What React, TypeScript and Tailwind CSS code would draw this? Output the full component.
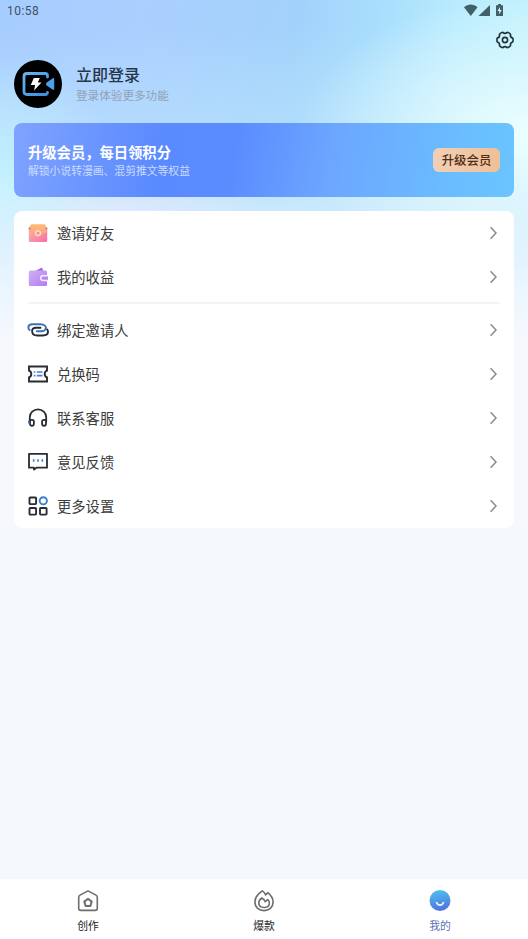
import type { ReactNode } from "react";

type RowProps = { icon: ReactNode; label: string };

// Menu icons
const InviteIcon = () => (
  <svg width="20" height="20" viewBox="0 0 20 20" fill="none">
    <defs>
      <linearGradient id="inviteBack" x1="0" y1="0" x2="0" y2="1">
        <stop stopColor="#fdbb74" />
        <stop offset="1" stopColor="#fba08f" />
      </linearGradient>
      <linearGradient id="inviteFront" x1="0" y1="0" x2="1" y2="1">
        <stop stopColor="#fdb8a8" />
        <stop offset="1" stopColor="#f86da4" />
      </linearGradient>
    </defs>
    <rect x="0.8" y="4" width="18.4" height="15" rx="1.5" fill="url(#inviteFront)" />
    <path d="M4 1.200h12c.8 0 1.300.5 1.600 1.200l.9 2.600v4c-3 2.500-5 3-8.500 3s-5.500-.5-8.500-3V5l.9-2.600c.3-.7.8-1.200 1.600-1.200z" fill="url(#inviteBack)" />
    <circle cx="1.600" cy="5.500" r="1" fill="#c9776a" />
    <circle cx="18.400" cy="5.500" r="1" fill="#c9776a" />
    <circle cx="10" cy="10.300" r="2.400" fill="#fb9684" stroke="#ffe0d2" strokeWidth="1.300" />
  </svg>
);

const WalletIcon = () => (
  <svg width="20" height="20" viewBox="0 0 20 20" fill="none">
    <defs>
      <linearGradient id="wallet" x1="0" y1="0" x2="1" y2="1">
        <stop stopColor="#d2b0f7" />
        <stop offset="1" stopColor="#b07cf2" />
      </linearGradient>
    </defs>
    <path d="M6.500 4.500l6.500-3.600c.7-.3 1.200-.1 1.400.5l1 3.100z" fill="#9a6bd6" />
    <rect x="0.800" y="3.500" width="18.200" height="15.500" rx="1.500" fill="url(#wallet)" />
    <path d="M20 8.700h-5a2.400 2.400 0 0 0 0 4.800h5" fill="#b58af0" stroke="#f6ecff" strokeWidth="1.500" />
  </svg>
);

const LinkIcon = () => (
  <svg width="22" height="20" viewBox="0 0 22 20" fill="none" strokeWidth="1.900" strokeLinecap="round" className="shrink-0">
    <path d="M2.600 10C.3 8.100 1.300 4.200 5 4.200h8.500c3.800 0 6 2.300 5.200 4.600-.6 1.700-2.100 2.500-4.200 2.500H9.800" stroke="#3b72b6" />
    <path d="M13.500 7.700H9C6.300 7.700 4.900 9.200 5.100 11.200c.2 2.600 2.200 4.300 5 4.300H16c3.300 0 5-1.600 5-3.700 0-1-.3-1.800-.9-2.400" stroke="#252b36" />
  </svg>
);

const TicketIcon = () => (
  <svg width="20" height="20" viewBox="0 0 20 20" fill="none">
    <path d="M1 2.500h18v4.200c-1.600.4-2.300 1.700-2.300 3.300s.7 2.900 2.300 3.300v4.200H1v-4.200c1.600-.4 2.300-1.700 2.300-3.300S2.600 7.100 1 6.700z" stroke="#292c33" strokeWidth="1.900" />
    <path d="M5.700 8h1.700M8.800 8h5.700M5.700 11.700h1.700M8.800 11.700h5.700" stroke="#4783ce" strokeWidth="1.700" />
  </svg>
);

const HeadsetIcon = () => (
  <svg width="20" height="20" viewBox="0 0 20 20" fill="none" strokeWidth="1.800" strokeLinejoin="round">
    <path d="M1.800 14V9a8.200 7.700 0 0 1 16.400 0v5" stroke="#292c33" />
    <path d="M2 11.800h2.200c1.200 0 1.700.7 1.700 1.700v2.300c0 1.200-.7 2-1.900 2S2 17 2 15.800z" stroke="#292c33" />
    <path d="M18 11.800h-2.200c-1.200 0-1.700.7-1.700 1.700v2.300c0 1.200.7 2 1.900 2s2-.8 2-2z" stroke="#292c33" />
    <path d="M.6 12.500v3" stroke="#4783ce" />
  </svg>
);

const FeedbackIcon = () => (
  <svg width="20" height="20" viewBox="0 0 20 20" fill="none">
    <path d="M1 1.800h18v13.900H8.500L6 17.600v-1.900H1z" stroke="#292c33" strokeWidth="1.800" strokeLinejoin="round" />
    <path d="M5.700 7.200v2.600M10 7.200v2.600M14.300 7.200v2.600" stroke="#4783ce" strokeWidth="1.700" />
  </svg>
);

const MoreIcon = () => (
  <svg width="20" height="20" viewBox="0 0 20 20" fill="none" stroke="#292c33" strokeWidth="1.900">
    <rect x="1.500" y="1.500" width="6.600" height="6.600" rx="0.800" />
    <rect x="1.500" y="12" width="6.600" height="6.600" rx="0.800" />
    <rect x="12" y="12" width="6.600" height="6.600" rx="0.800" />
    <circle cx="15.300" cy="4.800" r="3.600" stroke="#3b80c8" />
  </svg>
);

// Tab bar icons
const HomeIcon = () => (
  <svg width="22" height="22" viewBox="0 0 22 22" fill="none" stroke="#6d6d6d" strokeWidth="1.600" strokeLinejoin="round">
    <path d="M11 .9l8 4.200c.9.500 1.300 1.200 1.300 2.100v11.100c0 1.400-.7 2.100-2.100 2.100H3.800c-1.400 0-2.100-.7-2.100-2.100V7.200c0-.9.400-1.600 1.300-2.100z" />
    <path d="M11 8.800l3.700 2.800-1.400 4.400H8.700l-1.400-4.400z" strokeWidth="2" />
  </svg>
);

const FireIcon = () => (
  <svg width="22" height="22" viewBox="0 0 22 22" fill="none" stroke="#6d6d6d" strokeWidth="1.600" strokeLinejoin="round">
    <path d="M9.300.9c1.600 1 2.700 2.300 3.300 4l2.200-2.200c3.400 2.700 5.300 5.900 5.300 9.400 0 4.900-3.700 8.500-9.100 8.500s-9.100-3.600-9.100-8.500c0-3 1.200-5.600 3.600-8.100C7 2.700 8.200 1.600 9.300.9z" />
    <path d="M8.800 8c1.700.9 2.900 2.100 3.500 3.700l2.400-2.200c1.200 1.200 1.700 2.300 1.700 3.600 0 2.700-2.100 4.400-5.200 4.400s-5.400-1.700-5.400-4.400c0-2.100 1.100-3.800 3-5.100z" />
  </svg>
);

const SmileIcon = () => (
  <svg width="22" height="22" viewBox="0 0 22 22" fill="none">
    <defs>
      <linearGradient id="smile" x1="0.400" y1="0" x2="0.600" y2="1">
        <stop stopColor="#4dc0ee" />
        <stop offset="1" stopColor="#5070dc" />
      </linearGradient>
    </defs>
    <circle cx="11" cy="10.500" r="10.500" fill="url(#smile)" />
    <path d="M7.600 12.600c1 3.300 5.800 3.300 6.800 0" stroke="#dff3ff" strokeWidth="1.800" strokeLinecap="round" />
  </svg>
);

const Row = ({ icon, label }: RowProps) => (
  <div className="flex h-11 items-center pl-[14px] pr-[17px]">
    <div className="flex w-5 shrink-0 justify-center">{icon}</div>
    <span className="mb-px ml-[9px] flex-1 text-[14.300px] leading-5 text-[#3d3d3d]">{label}</span>
    <svg width="7" height="14" viewBox="0 0 7 14" fill="none" stroke="#8a8a8a" strokeWidth="1.500">
      <path d="M.6 1.200L6 7 .6 12.800" />
    </svg>
  </div>
);

const Tab = ({ icon, label, active }: RowProps & { active?: boolean }) => (
  <div className="flex flex-1 flex-col items-center pt-[11px]">
    {icon}
    <span className={`mt-[5px] text-[10.800px] leading-4 ${active ? "text-[#5b73b5]" : "text-[#222]"}`}>{label}</span>
  </div>
);

export default function App() {
  return (
    <div className="relative flex h-[939px] w-[528px] flex-col overflow-hidden bg-[#f5f9fe] font-['Noto_Sans_CJK_SC',sans-serif]">
      {/* Sky backdrop */}
      <div className="absolute inset-x-0 top-0 h-[340px] bg-[linear-gradient(98deg,#a6cdff_0%,#abcfff_25%,#a2d2fb_52%,#a9defd_66%,#b9ecfe_80%,#c8f5fc_100%)]" />
      <div className="absolute inset-x-0 top-0 h-[340px] bg-[radial-gradient(ellipse_230px_140px_at_100%_40%,#ecfffe,#ecfffe00),radial-gradient(ellipse_120px_130px_at_0%_55%,#c4f1ff,#c4f1ff00),radial-gradient(ellipse_180px_70px_at_18%_66%,#dce4fe,#dce4fe00),linear-gradient(to_bottom,#bfe6fd00_8%,#bfe6fdcc_55%,#bfe6fdcc_100%)]" />
      <div className="absolute inset-x-0 top-0 h-[340px] bg-[linear-gradient(to_bottom,#f5f9fe00_50%,#f5f9fe66_68%,#f5f9fecc_84%,#f5f9fe_100%)]" />

      {/* Status bar */}
      <div className="relative flex h-[22px] items-center justify-between pl-[7px] pr-[24px]">
        <span className="font-[Roboto,sans-serif] text-[12px] tracking-[0.450px] text-[#3c5068]">10:58</span>
        <svg width="40" height="13" viewBox="0 0 40 13" fill="#426069" className="-mt-[2px]">
          <path d="M0 3.200C4-.3 9.500-.3 13.500 3.200L6.800 12z" />
          <path d="M26 1v11H14.500z" />
          <path d="M34 0h3v1.200h2V12h-7V1.200h2z" />
          <path d="M36 3l-2.500 4h1.700v3.200L37.700 6H36z" fill="#d9f7fd" />
        </svg>
      </div>

      {/* Settings */}
      <div className="relative flex h-[38px] justify-end pr-[14px] pt-[9px]">
        <svg width="18" height="18" viewBox="-9 -9 18 18" fill="none" stroke="#20313a" strokeWidth="1.600" strokeLinejoin="round">
          <path d="M7.760-1.940Q8.400 0 7.760 1.940Q4.850 2.800 5.560 5.750Q4.200 7.270 2.200 7.690Q0 5.600-2.200 7.690Q-4.200 7.270-5.560 5.750Q-4.850 2.800-7.760 1.940Q-8.400 0-7.760-1.940Q-4.850-2.800-5.560-5.750Q-4.200-7.270-2.200-7.690Q0-5.600 2.200-7.690Q4.200-7.270 5.560-5.750Q4.850-2.800 7.760-1.940z" />
          <circle r="2.600" />
        </svg>
      </div>

      {/* Profile */}
      <div className="relative flex h-12 items-center px-[14px]">
        <div className="flex size-12 items-center justify-center rounded-full bg-black">
          <svg width="48" height="48" viewBox="0 0 48 48" fill="none">
            <defs>
              <linearGradient id="cam" x1="0" y1="0" x2="1" y2="1">
                <stop stopColor="#65b6ef" />
                <stop offset="1" stopColor="#3d8ddd" />
              </linearGradient>
            </defs>
            <path d="M33.500 17v-1.300c0-1.400-.8-2.200-2.200-2.200H13c-2.200 0-3 .8-3 3v15c0 2.200.8 3 3 3h18.300c1.400 0 2.200-.8 2.200-2.200" stroke="url(#cam)" strokeWidth="2.800" strokeLinecap="round" />
            <path d="M32 24c0-.8.300-1.300 1-1.700l5.500-3.800c1-.7 1.700-.4 1.700.7v9.600c0 1.100-.7 1.400-1.700.7L33 25.700c-.7-.4-1-.9-1-1.700z" fill="#4d9fe7" />
            <path d="M19.800 18h6l-2 4.500h3.700L20 30.500l1.200-5.500h-4.400z" fill="#fff" />
          </svg>
        </div>
        <div className="ml-[14px]">
          <div className="text-[16px] font-medium leading-[21px] text-[#25364a]">立即登录</div>
          <div className="-mb-px mt-px text-[11.600px] leading-[19px] text-[#91a1b4]">登录体验更多功能</div>
        </div>
      </div>

      {/* Member banner */}
      <div className="relative mx-[14px] mt-[15px] flex h-[74px] items-center justify-between rounded-lg bg-[linear-gradient(100deg,#7fa3ff_0%,#5a8aff_30%,#5b8cff_44%,#6ca6ff_63%,#6abfff_90%,#6bc4ff_100%)] px-[14px]">
        <div>
          <div className="text-[14.300px] font-bold leading-5 text-white">升级会员，每日领积分</div>
          <div className="text-[10.800px] leading-[17px] text-[#cbdcff]">解锁小说转漫画、混剪推文等权益</div>
        </div>
        <div className="flex h-[24px] w-[67px] items-center justify-center rounded-md bg-gradient-to-r from-[#f0d0b6] to-[#efbf97] text-[12.400px] font-medium text-[#512d18]">
          升级会员
        </div>
      </div>

      {/* Menu */}
      <div className="relative mx-[14px] mt-[14px] rounded-lg bg-white">
        <Row icon={<InviteIcon />} label="邀请好友" />
        <Row icon={<WalletIcon />} label="我的收益" />
        <div className="mx-[14px] mb-[4px] mt-[3px] h-[2px] bg-[#f4f4f5]" />
        <Row icon={<LinkIcon />} label="绑定邀请人" />
        <Row icon={<TicketIcon />} label="兑换码" />
        <Row icon={<HeadsetIcon />} label="联系客服" />
        <Row icon={<FeedbackIcon />} label="意见反馈" />
        <Row icon={<MoreIcon />} label="更多设置" />
      </div>

      {/* Tab bar */}
      <div className="relative mt-auto flex h-[60px] bg-white">
        <Tab icon={<HomeIcon />} label="创作" />
        <Tab icon={<FireIcon />} label="爆款" />
        <Tab icon={<SmileIcon />} label="我的" active />
      </div>
    </div>
  );
}
